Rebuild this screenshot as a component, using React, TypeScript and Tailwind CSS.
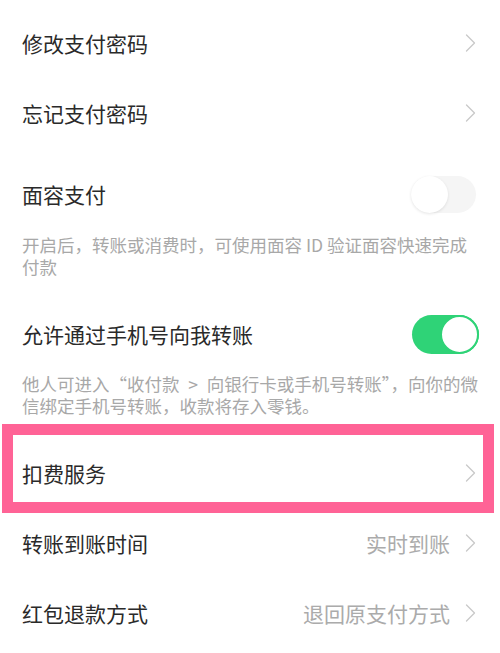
import React from "react";

const font = { fontFamily: '"Noto Sans CJK SC", "Noto Sans", sans-serif' };

const Chevron = () => (
  <svg width="11" height="18" viewBox="0 0 11 18" fill="none" className="shrink-0">
    <path d="M1.5 1 L9.5 9 L1.5 17" stroke="#c9c9c9" strokeWidth="1.3" strokeLinecap="round" strokeLinejoin="round" />
  </svg>
);

function NavRow({ title, value }: { title: string; value?: string }) {
  return (
    <div className="flex items-center justify-between h-[70px] pl-[22px] pr-[24px]">
      <span className="text-[21px] text-[#2a2a2a] leading-none">{title}</span>
      <div className="flex items-center gap-[15px]">
        {value && <span className="text-[21px] text-[#ababab] leading-none">{value}</span>}
        <Chevron />
      </div>
    </div>
  );
}

function SwitchOn() {
  return (
    <div className="w-[67px] h-[39px] rounded-full bg-[#2fd377] flex items-center justify-end">
      <div className="w-[39px] h-[39px] rounded-full bg-white border-[2px] border-[#2fd377]" />
    </div>
  );
}

function SwitchOff() {
  return (
    <div className="w-[65px] h-[37px] rounded-full bg-[#f5f5f5] flex items-center justify-start">
      <div className="w-[37px] h-[37px] rounded-full bg-white shadow-[0_1px_3px_rgba(0,0,0,0.10)]" />
    </div>
  );
}

export default function App() {
  return (
    <div className="w-[500px] h-[653px] bg-white overflow-hidden pt-[8px]" style={font}>
      <NavRow title="修改支付密码" />
      <NavRow title="忘记支付密码" />

      <div className="mt-[11px] flex items-center justify-between h-[70px] pl-[22px] pr-[24px]">
        <span className="text-[21px] text-[#2a2a2a] leading-none">面容支付</span>
        <SwitchOff />
      </div>
      <div className="mt-[5px] pl-[22px] pr-[22px] text-[17.5px] leading-[22px] text-[#a8a8a8] whitespace-nowrap">
        <div>开启后，转账或消费时，可使用面容 ID 验证面容快速完成</div>
        <div>付款</div>
      </div>

      <div className="mt-[21px] flex items-center justify-between h-[70px] pl-[22px] pr-[21px]">
        <span className="text-[21px] text-[#2a2a2a] leading-none">允许通过手机号向我转账</span>
        <SwitchOn />
      </div>
      <div className="mt-[4px] pl-[22px] pr-[22px] text-[17.5px] leading-[22px] text-[#a8a8a8] whitespace-nowrap">
        <div>他人可进入“收付款{"\u2002"}&gt;{"\u2002"}向银行卡或手机号转账”，向你的微</div>
        <div>信绑定手机号转账，收款将存入零钱。</div>
      </div>

      <div className="relative mt-[21px]">
        <NavRow title="扣费服务" />
        <div className="absolute -top-[14px] left-[2px] right-[6px] -bottom-[5px] border-[11px] border-[#ff6396] pointer-events-none" />
      </div>
      <NavRow title="转账到账时间" value="实时到账" />
      <NavRow title="红包退款方式" value="退回原支付方式" />
    </div>
  );
}
